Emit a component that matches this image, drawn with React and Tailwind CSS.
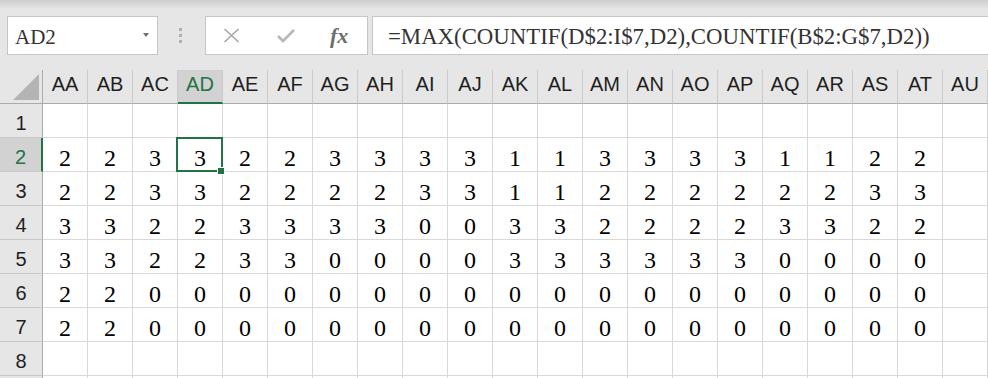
import React from 'react';

const COLS = ['AA', 'AB', 'AC', 'AD', 'AE', 'AF', 'AG', 'AH', 'AI', 'AJ', 'AK', 'AL', 'AM', 'AN', 'AO', 'AP', 'AQ', 'AR', 'AS', 'AT', 'AU'];

// values for rows 2..7, columns AA..AT (AU is empty)
const DATA = {
  2: [2, 2, 3, 3, 2, 2, 3, 3, 3, 3, 1, 1, 3, 3, 3, 3, 1, 1, 2, 2],
  3: [2, 2, 3, 3, 2, 2, 2, 2, 3, 3, 1, 1, 2, 2, 2, 2, 2, 2, 3, 3],
  4: [3, 3, 2, 2, 3, 3, 3, 3, 0, 0, 3, 3, 2, 2, 2, 2, 3, 3, 2, 2],
  5: [3, 3, 2, 2, 3, 3, 0, 0, 0, 0, 3, 3, 3, 3, 3, 3, 0, 0, 0, 0],
  6: [2, 2, 0, 0, 0, 0, 0, 0, 0, 0, 0, 0, 0, 0, 0, 0, 0, 0, 0, 0],
  7: [2, 2, 0, 0, 0, 0, 0, 0, 0, 0, 0, 0, 0, 0, 0, 0, 0, 0, 0, 0],
};

// row 9 only peeks in at the bottom edge, so it gets no label
const ROWS = [1, 2, 3, 4, 5, 6, 7, 8, 9];

const sans = "font-['Liberation_Sans',Arial,sans-serif]";
const serif = "font-['Liberation_Serif','Times_New_Roman',serif]";

function Toolbar() {
  return (
    <div className="h-[70px] relative">
      <div className="absolute top-0 left-0 right-0 h-[9px] bg-linear-to-b from-[#cdcdcd] to-[#e6e6e6]" />
      <div className="relative flex pt-[16px] pl-[7px]">
        {/* Name box */}
        <div className="shrink-0 w-[151px] h-[39px] bg-white border border-[#c6c6c6] flex items-center justify-between pl-[7px] pr-[8px]">
          <span className={`${serif} text-[21px] text-[#333] leading-none pt-[3px]`}>AD2</span>
          <span className="w-0 h-0 border-l-[3.5px] border-r-[3.5px] border-t-[4px] border-l-transparent border-r-transparent border-t-[#6f6f6f] mb-[2px]" />
        </div>

        {/* grip dots */}
        <div className="shrink-0 ml-[21px] w-[3px] flex flex-col gap-[3px] pt-[12px]">
          <span className="w-[3px] h-[3px] bg-[#b0b0b0]" />
          <span className="w-[3px] h-[3px] bg-[#b0b0b0]" />
          <span className="w-[3px] h-[3px] bg-[#b0b0b0]" />
        </div>

        {/* cancel / enter / fx */}
        <div className="shrink-0 ml-[23px] w-[163px] h-[39px] bg-white border border-[#c6c6c6] flex items-center">
          <svg width="17" height="15" viewBox="0 0 17 15" className="ml-[17px]">
            <path d="M1.5 1 L15.5 14 M15.5 1 L1.5 14" stroke="#a8a8a8" strokeWidth="1.7" fill="none" />
          </svg>
          <svg width="20" height="17" viewBox="0 0 20 17" className="ml-[36px]">
            <path d="M2 9 L7 14 L18 3" stroke="#b9b9b9" strokeWidth="2.8" fill="none" />
          </svg>
          <span className={`${serif} ml-[34px] italic font-bold text-[22px] text-[#6e6e6e] leading-none`}>fx</span>
        </div>

        {/* formula */}
        <div className="shrink-0 ml-[4px] w-[640px] h-[39px] bg-white border border-[#c6c6c6] flex items-center pl-[15px]">
          <span className={`${serif} text-[22.8px] text-[#333] leading-none pt-[3px] whitespace-nowrap`}>
            =MAX(COUNTIF(D$2:I$7,D2),COUNTIF(B$2:G$7,D2))
          </span>
        </div>
      </div>
    </div>
  );
}

function Corner() {
  return (
    <div className="bg-[#e6e6e6] border-r border-b border-[#ababab] flex items-end justify-end pr-[3px] pb-[3px]">
      <svg width="26" height="26" viewBox="0 0 26 26">
        <polygon points="26,0 26,26 0,26" fill="#b4b4b4" />
      </svg>
    </div>
  );
}

function ColHeader({ name }) {
  const active = name === 'AD';
  return (
    <div
      className={`${sans} text-[20px] flex items-center justify-center pb-[5px] border-r border-[#cbcbcb] ${
        active
          ? 'bg-[#d2d2d2] text-[#217346] border-b-2 border-b-[#217346]'
          : 'bg-[#e6e6e6] text-[#1f1f1f] border-b border-b-[#ababab]'
      }`}
    >
      {name}
    </div>
  );
}

function RowHeader({ n }) {
  const active = n === 2;
  return (
    <div
      className={`${sans} text-[20px] flex items-center justify-center pt-[4px] border-b border-[#c8c8c8] ${
        active
          ? 'bg-[#d2d2d2] text-[#217346] border-r-2 border-r-[#217346]'
          : 'bg-[#e6e6e6] text-[#1f1f1f] border-r border-r-[#ababab]'
      }`}
    >
      {n < 9 ? n : ''}
    </div>
  );
}

function Cell({ value, selected }) {
  return (
    <div className={`relative bg-white border-r border-b border-[#d9d9d9] flex items-end justify-center ${selected ? 'z-10' : ''}`}>
      <span className={`${serif} text-[24px] leading-[26px] text-black`}>{value}</span>
      {selected && (
        <>
          <div className="absolute -left-[2px] -top-[1px] -right-[1px] -bottom-[1px] border-2 border-[#217346]" />
          <div className="absolute -right-[2px] -bottom-[3px] w-[6px] h-[6px] bg-[#217346] outline outline-white" />
        </>
      )}
    </div>
  );
}

export default function App() {
  return (
    <div className="w-[988px] h-[378px] overflow-hidden bg-[#e6e6e6]">
      <Toolbar />
      <div className="grid grid-cols-[43px_repeat(21,45px)] auto-rows-[34px]">
        <Corner />
        {COLS.map((c) => (
          <ColHeader key={c} name={c} />
        ))}
        {ROWS.map((r) => (
          <React.Fragment key={r}>
            <RowHeader n={r} />
            {COLS.map((c, i) => (
              <Cell
                key={c}
                value={DATA[r] && i < 20 ? DATA[r][i] : ''}
                selected={r === 2 && c === 'AD'}
              />
            ))}
          </React.Fragment>
        ))}
      </div>
    </div>
  );
}
